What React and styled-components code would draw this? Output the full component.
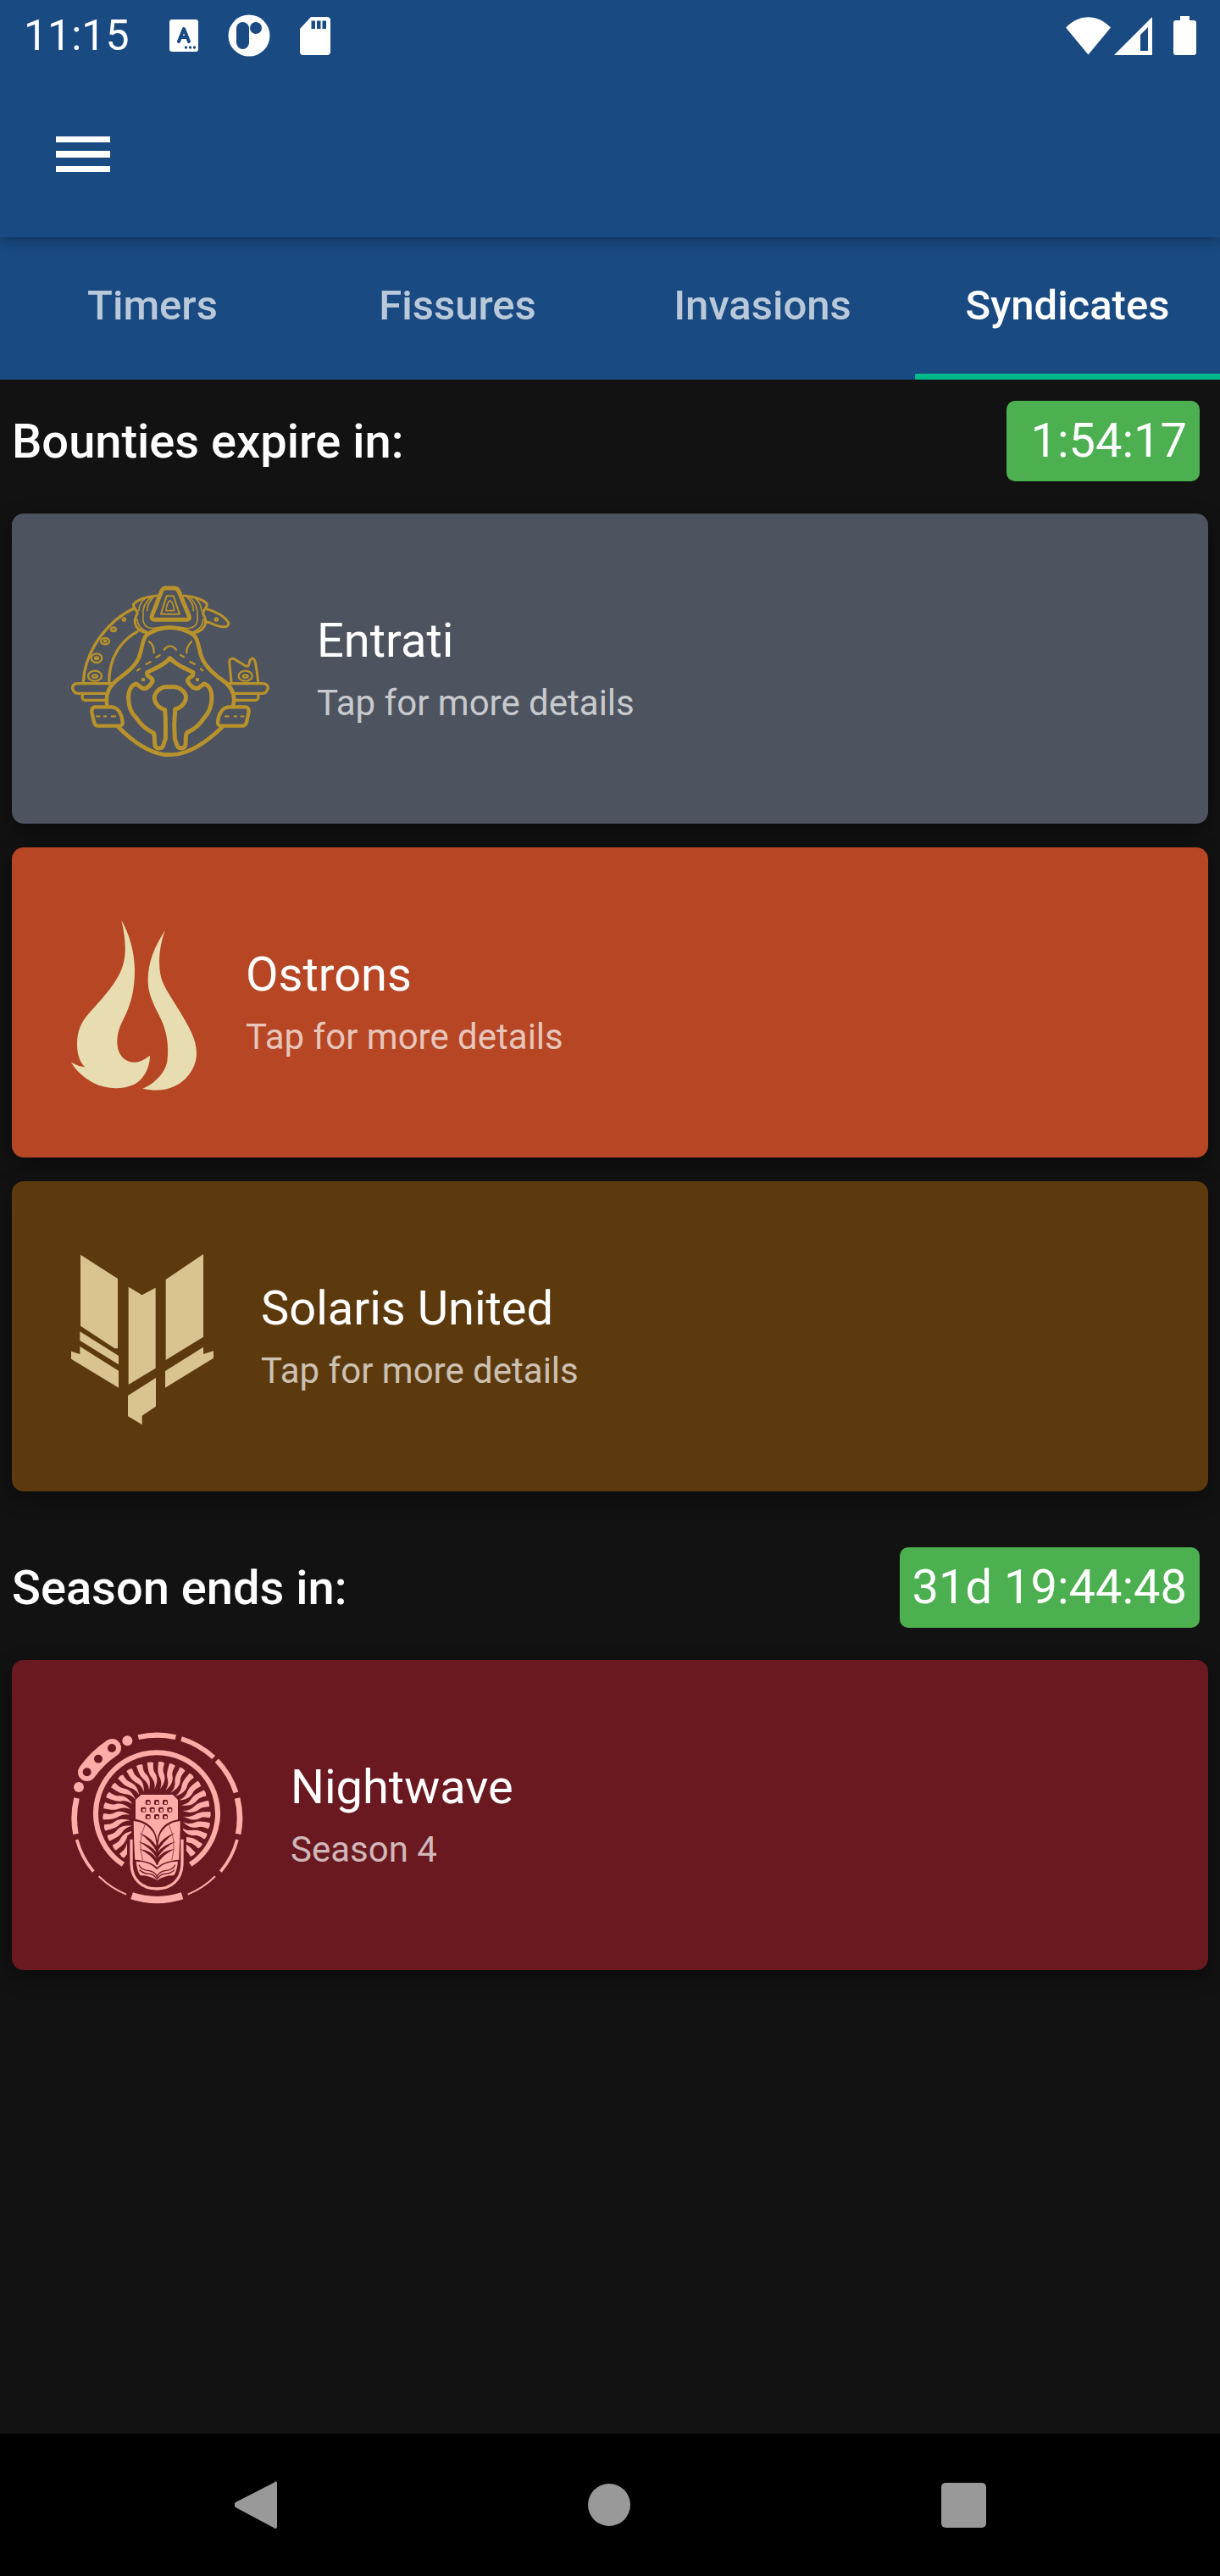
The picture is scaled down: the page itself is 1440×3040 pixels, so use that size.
import React from "react";
import styled, { createGlobalStyle } from "styled-components";

const GlobalStyle = createGlobalStyle`
  *, *::before, *::after { box-sizing: border-box; }
  body { margin: 0; background: #121212; }
  button { font: inherit; color: inherit; background: none; border: 0; padding: 0; cursor: pointer; }
  h2, h3, p { margin: 0; }
  svg { display: block; flex: none; }
`;

const Screen = styled.div`
  display: flex;
  flex-direction: column;
  min-height: 100vh;
  background: #121212;
  color: #fff;
  font-family: Roboto, "Liberation Sans", sans-serif;
`;

const TopBar = styled.header`
  position: relative;
  z-index: 1;
  background: #194a82;
  box-shadow: 0 4px 16px rgba(0, 0, 0, 0.3);
`;

const StatusBar = styled.div`
  display: flex;
  align-items: center;
  justify-content: space-between;
  height: 84px;
  padding: 0 28px;
`;

const StatusGroup = styled.div`
  display: flex;
  align-items: center;
  gap: ${(p) => p.$gap}px;
`;

const Clock = styled.time`
  font-size: 50px;
  line-height: 56px;
  margin-right: 12px;
`;

const Toolbar = styled.div`
  display: flex;
  align-items: center;
  height: 196px;
  padding: 0 56px;
`;

const IconButton = styled.button`
  display: flex;
  align-items: center;
  justify-content: center;
`;

const Tabs = styled.nav`
  display: grid;
  grid-template-columns: repeat(4, 1fr);
  height: 168px;
  background: #194a82;
`;

const Tab = styled.button`
  && {
    color: ${(p) => (p.$active ? "#fff" : "rgba(255, 255, 255, 0.7)")};
    font-size: 49px;
    line-height: 56px;
    font-weight: 500;
    border-bottom: 7px solid ${(p) => (p.$active ? "#00ba8a" : "transparent")};
  }
`;

const Content = styled.main`
  flex: 1;
  display: flex;
  flex-direction: column;
  gap: 66px;
  padding: 25px 14px 56px;
`;

const Section = styled.section`
  display: flex;
  flex-direction: column;
  gap: 28px;
`;

const SectionHeader = styled.div`
  display: flex;
  align-items: center;
  justify-content: space-between;
  padding: 0 10px 10px 0;
`;

const SectionTitle = styled.h2`
  font-size: 56px;
  line-height: 66px;
  font-weight: 500;
`;

const Countdown = styled.time`
  padding: 14px 15px;
  border-radius: 10px;
  background: #4caf50;
  font-size: 56px;
  line-height: 67px;
  white-space: pre;
`;

const Card = styled.button`
  && {
    display: flex;
    align-items: center;
    gap: 56px;
    width: 100%;
    padding: 85px 70px 78px;
    border-radius: 14px;
    background: ${(p) => p.$color};
    box-shadow: 0 8px 24px rgba(0, 0, 0, 0.4);
    text-align: left;
  }
`;

const CardText = styled.span`
  display: flex;
  flex-direction: column;
  gap: 13px;
  padding-bottom: 4px;
`;

const CardTitle = styled.span`
  font-size: 56px;
  line-height: 66px;
`;

const CardHint = styled.span`
  font-size: 42px;
  line-height: 56px;
  color: rgba(255, 255, 255, 0.7);
`;

const SystemNav = styled.footer`
  display: flex;
  align-items: center;
  justify-content: center;
  gap: 367px;
  height: 168px;
  background: #000;
`;

const KeyboardIcon = () => (
  <svg width="34" height="38" viewBox="0 0 34 38">
    <rect width="34" height="38" rx="3" fill="#fff" />
    <path d="M11 26 17 11 23 26M13 21h8" fill="none" stroke="#194a82" strokeWidth="4" strokeLinecap="round" strokeLinejoin="round" />
    <g fill="#194a82">
      <circle cx="19.500" cy="33" r="1.700" />
      <circle cx="24.500" cy="33" r="1.700" />
      <circle cx="29.500" cy="33" r="1.700" />
    </g>
  </svg>
);

const AppIcon = () => (
  <svg width="50" height="50" viewBox="0 0 50 50">
    <circle cx="25" cy="25" r="24.500" fill="#fff" />
    <rect x="10" y="9" width="15" height="32" rx="7.500" fill="#194a82" />
    <circle cx="33" cy="16" r="7" fill="#194a82" />
  </svg>
);

const SdCardIcon = () => (
  <svg width="36" height="45" viewBox="0 0 36 45">
    <path d="M13 0H32a4 4 0 0 1 4 4V41a4 4 0 0 1-4 4H4a4 4 0 0 1-4-4V14Z" fill="#fff" />
    <path d="M13.500 4.500h4.500v9.500h-4.500zM20 4.500h4.500v9.500H20zM26.500 4.500h4.500v9.500h-4.500z" fill="#194a82" />
  </svg>
);

const WifiIcon = () => (
  <svg width="53" height="45" viewBox="0 0 53 45">
    <path d="M0 12.500C16-4 37-4 53 12.500L26.500 44.500Z" fill="#fff" />
  </svg>
);

const SignalIcon = () => (
  <svg width="45" height="45" viewBox="0 0 45 45">
    <path d="M45 0V45H0ZM40 12 31 21V40H40Z" fill="#fff" fillRule="evenodd" />
  </svg>
);

const BatteryIcon = () => (
  <svg width="27" height="46" viewBox="0 0 27 46">
    <path d="M8 0H19V5H24a3 3 0 0 1 3 3V43a3 3 0 0 1-3 3H3a3 3 0 0 1-3-3V8a3 3 0 0 1 3-3H8Z" fill="#fff" />
  </svg>
);

const MenuIcon = () => (
  <svg width="84" height="84" viewBox="0 0 84 84">
    <path d="M10 21h64v7H10zM10 38h64v8H10zM10 56h64v7H10z" fill="#fff" />
  </svg>
);

const EntratiIcon = () => (
  <svg width="234" height="203" viewBox="42 61 702 609" fill="none" stroke="#b8922b" strokeLinecap="round" strokeLinejoin="round">
    {/* crest */}
    <path strokeWidth="15" d="M376 70H409Q418 71 423 81L460 170Q463 181 450 182H337Q324 181 328 168L362 81Q366 71 376 70Z" />
    <path strokeWidth="6" d="M380 98H404L426 162H360Z" />
    <path strokeWidth="5" d="M392 114Q404 122 407 150H378Q380 122 392 114Z" />
    <path strokeWidth="9" d="M344 97Q285 103 263 126C258 142 279 147 276 162C258 190 271 216 300 226Q320 231 336 222" />
    <path strokeWidth="9" d="M441 97Q500 103 522 124C527 142 506 147 509 162C528 190 515 216 488 226Q465 231 449 222" />
    <path strokeWidth="5" d="M304 106Q285 120 281 150M324 103Q292 130 297 168C294 192 302 212 332 213Q364 206 392 206Q425 207 452 213C484 212 492 192 489 168Q492 130 462 103M482 106Q500 120 504 150M333 102Q309 128 311 150M453 102Q477 128 475 150M276 180Q278 213 309 223M510 180Q508 213 478 223" />
    {/* tail and arm */}
    <path strokeWidth="9" d="M519 143C560 155 587 172 599 192C602 207 588 209 570 206Q548 201 535 193L521 190" />
    <circle strokeWidth="7" cx="556" cy="181" r="5" />
    <path strokeWidth="10" d="M266 141C180 180 92 282 85 402M276 224C215 258 176 320 176 402" />
    <g strokeWidth="7">
      <circle cx="229" cy="181" r="5" />
      <ellipse cx="192" cy="216" rx="9" ry="7" /><circle cx="192" cy="216" r="1" />
      <ellipse cx="162" cy="258" rx="15" ry="11" /><ellipse cx="162" cy="258" rx="4" ry="2" />
      <ellipse cx="132" cy="318" rx="19" ry="16" /><ellipse cx="132" cy="318" rx="6" ry="4" />
      <ellipse cx="126" cy="381" rx="24" ry="18" /><ellipse cx="126" cy="382" rx="9" ry="5" />
      <ellipse cx="659" cy="381" rx="24" ry="18" /><ellipse cx="659" cy="382" rx="9" ry="5" />
    </g>
    <path strokeWidth="9" d="M609 402L602 330Q604 317 617 320L660 346Q669 350 672 338Q675 320 684 319C695 318 698 350 704 402" />
    {/* side plates */}
    <path strokeWidth="10" d="M186 408H66C42 408 43 429 56 440Q61 444 73 443H166M600 408H718C744 408 742 429 730 440Q724 444 710 443H620" />
    <path strokeWidth="10" d="M82 447Q79 466 90 467H162M704 447Q707 466 696 467H624" />
    <path strokeWidth="13" d="M126 491H185C211 492 222 520 224 544Q225 557 212 558H138Q126 558 123 545L115 509Q114 492 126 491ZM660 491H600C575 492 563 520 561 544Q560 557 574 558H647Q660 558 663 545L671 509Q671 492 660 491Z" />
    <path strokeWidth="7" d="M133 524H142M159 524H165M186 524H198M588 524H599M620 524H627M644 524H652" />
    {/* hood */}
    <path strokeWidth="14" d="M169 485C163 450 172 421 202 397C245 365 275 342 285 307C300 257 293 238 333 223Q391 197 452 223C492 238 488 257 501 307C512 342 544 373 579 397C614 421 624 450 616 485M209 562C257 610 313 650 368 659Q392 661 418 658C473 648 530 607 577 562" />
    {/* face */}
    <path strokeWidth="15" d="M392 318C421 350 445 351 474 369C479 389 450 382 455 402C468 421 481 431 495 422L512 409C551 417 547 496 512 530C498 554 480 570 452 582C441 601 457 633 435 637C413 638 418 622 409 604C405 555 408 520 410 499C445 489 459 456 439 435Q421 417 392 420Q363 417 347 435C326 456 339 490 374 501C378 540 376 580 376 604C367 622 372 639 350 637C328 632 344 600 333 582C306 570 289 554 273 530C237 496 234 417 273 409L290 422C304 431 318 421 330 402C335 382 306 389 311 369C340 351 364 350 392 318Z" />
    <circle cx="297" cy="394" r="7" fill="#b8922b" stroke="none" />
    <circle cx="489" cy="394" r="7" fill="#b8922b" stroke="none" />
    <path strokeWidth="7" d="M371 288Q392 262 414 288M318 260Q336 272 335 299M468 260Q450 276 451 299M276 362L284 356M308 339L323 331M343 315L356 308M429 307L441 314M463 331L479 339M501 356L508 362" />
  </svg>
);

const OstronsIcon = () => (
  <svg width="150" height="203" viewBox="42 43 450 609" fill="#e8ddb0">
    <path d="M220 46C248 94 266 158 267 220C267 274 261 318 241 366C223 407 205 433 205 475C204 521 231 549 266 549Q290 549 321 525C321 569 298 611 264 628C220 647 163 644 121 622C90 606 60 580 42 549Q66 563 90 566C68 543 63 512 63 485C63 441 75 409 107 373C145 331 187 287 212 238C240 183 238 125 220 46Z" />
    <path d="M375 81C351 142 347 222 367 267C379 295 404 330 428 371C457 421 486 465 486 518C486 564 457 609 412 632C378 650 337 651 295 642C335 626 374 588 382 546C390 480 377 430 357 390C336 347 314 309 314 262C313 196 338 137 375 81Z" />
  </svg>
);

const SolarisIcon = () => (
  <svg width="168" height="203" viewBox="42 54 504 609" fill="#d9c38f">
    <path d="M75 59 207 144V391H196L75 311ZM73 331 210 417V448L73 363ZM42 401 73 411V384L210 470V530L42 428Z" />
    <path d="M245 173 293 202 341 176V461L245 519ZM243 558 342 495V596L293 629V661L243 631Z" />
    <path d="M377 147 510 57V350L377 432ZM375 471 510 386V411L546 400V425L375 530Z" />
  </svg>
);

const polar = (radius, degrees) => {
  const t = (degrees * Math.PI) / 180;
  return `${(346 + radius * Math.sin(t)).toFixed(1)} ${(347 - radius * Math.cos(t)).toFixed(1)}`;
};

const RING_SEGMENTS = [
  [-13, 13, 18, 294], [17, 43, 17, 294], [46, 72, 18, 294], [76, 101, 20, 293],
  [105, 130, 11, 294], [135, 158, 6, 291], [162, 198, 25, 289],
  [202, 225, 6, 291], [230, 255, 11, 294], [259, 284, 20, 293],
];
const RAYS = Array.from({ length: 24 }, (_, i) => -139 + i * 12);

const NightwaveIcon = () => (
  <svg width="203" height="203" viewBox="42 42 609 609" fill="#ffaca8">
    <g fill="none" stroke="#ffaca8">
      {RING_SEGMENTS.map(([from, to, width, r]) => (
        <path key={from} strokeWidth={width} d={`M${polar(r, from)}A${r} ${r} 0 0 1 ${polar(r, to)}`} />
      ))}
      <path strokeWidth="64" strokeLinecap="round" d="M98 184Q136 132 187 98" />
      <path strokeWidth="18" d="M226 511A216 216 0 1 1 464 511" />
    </g>
    <circle cx="69" cy="237" r="18" />
    <circle cx="241" cy="73" r="18" />
    <g fill="#6a1921">
      <circle cx="98" cy="184" r="15" />
      <circle cx="138" cy="137" r="15" />
      <circle cx="186" cy="99" r="15" />
    </g>
    {RAYS.map((angle) => (
      <path
        key={angle}
        transform={`translate(345 338) rotate(${angle})`}
        d="M-11-190Q0-193 11-188C8-170 6-163 13-149C22-129 14-112 4-94C8-112 6-123-1-135C-12-153-10-167-11-190Z"
      />
    ))}
    <path fill="#6a1921" d="M264 284 286 257H406L428 284V350H438V398L450 410V520Q438 610 346 612Q252 610 240 520V410L256 398V350H264Z" />
    <path d="M290 264H402L420 282V352C385 358 352 378 347 428C342 378 307 358 270 350V282Z" />
    <path d="M263 357C310 362 342 395 342 430L347 436L352 430C352 395 382 362 428 357C429 400 425 450 424 494C392 496 366 504 347 521C327 504 302 496 268 494C265 450 264 400 263 357Z" />
    <g fill="#6a1921">
      <path d="M283 399Q325 414 346 449V469Q325 428 283 399ZM280 430Q322 439 346 470V490Q325 453 280 430ZM283 456Q325 461 346 491V512Q325 474 283 456Z" />
      <path d="M410 399Q367 414 346 449V469Q367 428 410 399ZM412 430Q370 439 346 470V490Q367 453 412 430ZM409 456Q367 461 346 491V512Q367 474 409 456Z" />
      <path d="M343 432H350V512H343Z" />
    </g>
    <path fill="none" stroke="#6a1921" strokeWidth="2" d="M304 370Q275 430 296 496M388 370Q417 430 398 496" />
    <path d="M272 500C304 500 330 510 346 529C362 510 390 500 420 500Q417 535 405 550Q370 550 347 567Q322 550 287 550Q275 535 272 500Z" />
    <path fill="none" stroke="#6a1921" strokeWidth="4" d="M282 512Q288 531 318 533Q340 538 346 554Q352 538 374 533Q404 531 410 512M284 530Q300 545 325 545Q338 550 346 562Q354 550 367 545Q394 545 408 530" />
    <path fill="none" stroke="#ffaca8" strokeWidth="10" d="M255 422V510C257 565 293 597 345 597C397 597 433 565 435 510V422" />
    <g fill="#6a1921">
      {[[314, 291], [345, 291], [375, 291], [298, 317], [329, 317], [360, 317], [391, 317], [314, 342], [345, 342], [375, 342]].map(([x, y]) => (
        <g key={`${x}-${y}`}>
          <rect x={x - 9} y={y - 9} width="18" height="18" rx="5" />
          <rect x={x - 3} y={y - 3} width="9" height="10" rx="2" fill="#ffaca8" />
        </g>
      ))}
    </g>
  </svg>
);

const BackIcon = () => (
  <svg width="50" height="56" viewBox="3 0 50 56">
    <path d="M49 2Q53-2 53 3V53Q53 58 49 55L4 31Q1 28 4 25Z" fill="#999" />
  </svg>
);

const HomeIcon = () => (
  <svg width="50" height="50" viewBox="0 0 50 50">
    <circle cx="25" cy="25" r="25" fill="#999" />
  </svg>
);

const RecentsIcon = () => (
  <svg width="53" height="53" viewBox="0 0 53 53">
    <rect width="53" height="53" rx="5" fill="#999" />
  </svg>
);

const TABS = ["Timers", "Fissures", "Invasions", "Syndicates"];

const SECTIONS = [
  {
    title: "Bounties expire in:",
    left: " 1:54:17",
    cards: [
      { name: "Entrati", hint: "Tap for more details", color: "#4d535f", Icon: EntratiIcon },
      { name: "Ostrons", hint: "Tap for more details", color: "#b64624", Icon: OstronsIcon },
      { name: "Solaris United", hint: "Tap for more details", color: "#5d3a0e", Icon: SolarisIcon },
    ],
  },
  {
    title: "Season ends in:",
    left: "31d 19:44:48",
    cards: [{ name: "Nightwave", hint: "Season 4", color: "#6a1921", Icon: NightwaveIcon }],
  },
];

export default function App() {
  const [active, setActive] = React.useState("Syndicates");
  return (
    <Screen>
      <GlobalStyle />
      <TopBar>
        <StatusBar>
          <StatusGroup $gap={35}>
            <Clock>11:15</Clock>
            <KeyboardIcon />
            <AppIcon />
            <SdCardIcon />
          </StatusGroup>
          <StatusGroup $gap={25}>
            <StatusGroup $gap={4}>
              <WifiIcon />
              <SignalIcon />
            </StatusGroup>
            <BatteryIcon />
          </StatusGroup>
        </StatusBar>
        <Toolbar>
          <IconButton aria-label="Open menu"><MenuIcon /></IconButton>
        </Toolbar>
      </TopBar>
      <Tabs>
        {TABS.map((tab) => (
          <Tab key={tab} $active={tab === active} onClick={() => setActive(tab)}>{tab}</Tab>
        ))}
      </Tabs>
      <Content>
        {SECTIONS.map(({ title, left, cards }) => (
          <Section key={title}>
            <SectionHeader>
              <SectionTitle>{title}</SectionTitle>
              <Countdown>{left}</Countdown>
            </SectionHeader>
            {cards.map(({ name, hint, color, Icon }) => (
              <Card key={name} $color={color}>
                <Icon />
                <CardText>
                  <CardTitle>{name}</CardTitle>
                  <CardHint>{hint}</CardHint>
                </CardText>
              </Card>
            ))}
          </Section>
        ))}
      </Content>
      <SystemNav>
        <IconButton aria-label="Back"><BackIcon /></IconButton>
        <IconButton aria-label="Home"><HomeIcon /></IconButton>
        <IconButton aria-label="Recent apps"><RecentsIcon /></IconButton>
      </SystemNav>
    </Screen>
  );
}
